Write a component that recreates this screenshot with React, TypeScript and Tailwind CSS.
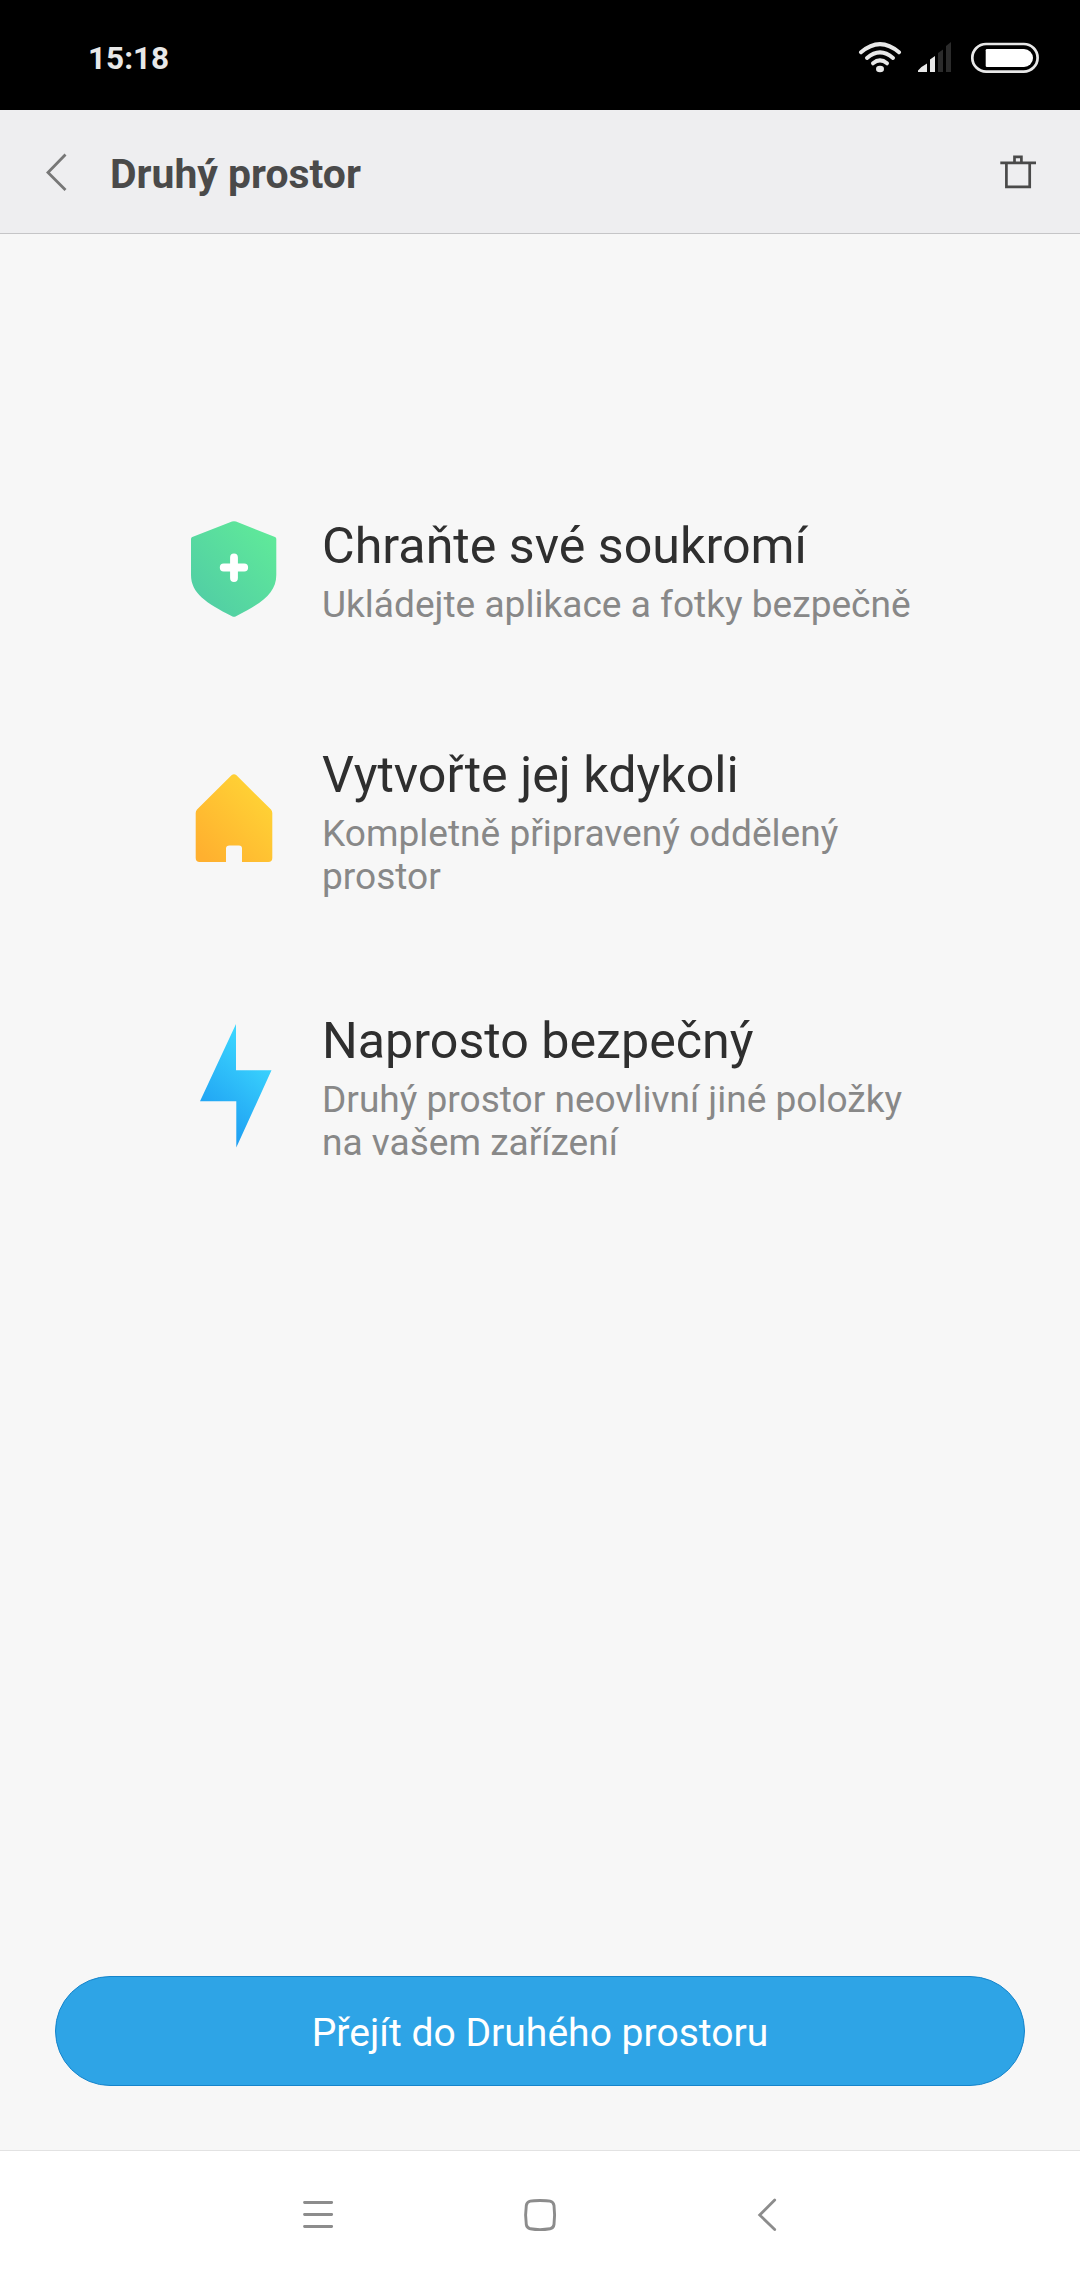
import type { ReactNode } from "react";

function StatusBar() {
  return (
    <div className="flex h-[110px] items-center justify-between bg-black pl-[88px] pr-[40px]">
      <span className="pt-2 text-[31.500px] leading-[38px] font-bold text-[#e8e8e8]">15:18</span>
      <svg className="mt-[6px] h-[34px] w-[182px]" viewBox="858 41 182 34" fill="none">
        <g stroke="#e8e8e8" strokeWidth="4" strokeLinecap="round">
          <path d="M861 52.300Q880 36 899 52.300" />
          <path d="M867 58Q880 46.800 893 58" />
          <path d="M873 63.300Q880 57.500 887 63.300" />
        </g>
        <ellipse cx="880" cy="69" rx="4" ry="3.200" fill="#e8e8e8" />
        <path d="M927 63.500V72H918V70.500Q922 66 927 63.500ZM930 59.500L935 56V72H930Z" fill="#e8e8e8" />
        <path d="M938 53L943 49.500V72H938ZM946 46L951 42V72H946Z" fill="#2b2b2b" />
        <rect x="972.300" y="44" width="65.300" height="27.600" rx="13.800" stroke="#e8e8e8" strokeWidth="2.700" />
        <path d="M987 49H1024A9 9 0 0 1 1024 67H987Q985.700 67 985.700 65.700V50.300Q985.700 49 987 49Z" fill="#fff" />
      </svg>
    </div>
  );
}

function Header() {
  return (
    <header className="flex h-[124px] items-center border-b border-[#c5c5c7] bg-[#eeeef0] pl-[45px] pr-[43px]">
      <svg className="h-[40px] w-[24px]" viewBox="0 0 24 40" fill="none">
        <path d="M20.500 2.500L3 20.500L20.500 38" stroke="#777" strokeWidth="2.800" />
      </svg>
      <h1 className="ml-[41px] mt-[5px] text-[40.900px] leading-[48px] font-bold text-[#4a4a4a]">
        Druhý prostor
      </h1>
      <svg className="ml-auto h-[34px] w-[38px]" viewBox="999 154.500 38 34" fill="none" stroke="#4a4a4a" strokeWidth="2.700">
        <path d="M1000.300 162.300H1036" />
        <path d="M1014.500 162V156.300H1021.400V162" />
        <path d="M1006.400 162V186.400H1029.700V162" />
      </svg>
    </header>
  );
}

function ShieldIcon() {
  return (
    <svg className="mt-[4px] h-[96px] w-[88px] shrink-0" viewBox="0 0 88 96">
      <defs>
        <linearGradient id="shield" x1="0.85" y1="0.1" x2="0.15" y2="0.85">
          <stop offset="0" stopColor="#5fe89a" />
          <stop offset="1" stopColor="#52cfa4" />
        </linearGradient>
      </defs>
      <path
        d="M42 .6Q44 -.2 46 .6L85 16Q86.300 16.600 86.300 18V54C86.300 72 72 82 46 95.300Q44 96.400 42 95.300C16 82 1 72 1 54V18Q1 16.600 2.300 16Z"
        fill="url(#shield)"
      />
      <path d="M44 36.500V57M33.700 46.500H54.200" stroke="#fff" strokeWidth="7.800" strokeLinecap="round" />
    </svg>
  );
}

function HouseIcon() {
  return (
    <svg className="mt-[28px] h-[90px] w-[88px] shrink-0" viewBox="0 0 88 90">
      <defs>
        <linearGradient id="house" x1="0.8" y1="0.2" x2="0.1" y2="0.95">
          <stop offset="0" stopColor="#ffd135" />
          <stop offset="1" stopColor="#ffb02f" />
        </linearGradient>
      </defs>
      <path
        d="M41.500 1.300Q44 -.7 46.500 1.300L81 35.500Q82.300 37 82.300 39V84Q82.300 88 78.300 88H52V74.500Q52 71.500 49 71.500H39.500Q36 71.500 36 74.500V88H9.700Q5.700 88 5.700 84V39Q5.700 37 7 35.500Z"
        fill="url(#house)"
      />
    </svg>
  );
}

function BoltIcon() {
  return (
    <svg className="mt-[12px] h-[124px] w-[88px] shrink-0" viewBox="0 0 88 124">
      <defs>
        <linearGradient id="bolt" x1="0.7" y1="0.1" x2="0.3" y2="0.9">
          <stop offset="0" stopColor="#3dd9ff" />
          <stop offset="1" stopColor="#1d9df2" />
        </linearGradient>
      </defs>
      <path d="M46 0V46.300H81.500L46.300 123.500V77.300H10Z" fill="url(#bolt)" />
    </svg>
  );
}

function Feature({ icon, title, children }: { icon: ReactNode; title: string; children: ReactNode }) {
  return (
    <div className="flex items-start gap-[44px]">
      {icon}
      <div>
        <h2 className="text-[50.200px] leading-[57px] text-[#2f2f2f]">{title}</h2>
        <p className="mt-[9px] text-[37.100px] leading-[43px] text-[#888]">{children}</p>
      </div>
    </div>
  );
}

function NavBar() {
  return (
    <nav className="flex h-[130px] items-center border-t border-[#e2e2e2] bg-white pb-[1px] pl-[302px]">
      <svg className="h-[34px] w-[32px]" viewBox="0 0 32 34" fill="none" stroke="#8c8c8c" strokeWidth="2.800" strokeLinecap="round">
        <path d="M2.500 4.500H29.700M2.500 16.500H29.700M2.500 28.500H29.700" />
      </svg>
      <svg className="ml-[189px] h-[34px] w-[34px]" viewBox="0 0 34 34" fill="none">
        <path
          d="M17 2.500C22 2.500 25 2.700 27 3.200Q30.500 4 31 7.500C31.700 13 31.700 21 31 26.500Q30.500 30 27 30.800C21 31.800 13 31.800 7.300 30.800Q3.800 30 3.300 26.500C2.500 21 2.500 13 3.300 7.500Q3.800 4 7.300 3.200C9.500 2.700 12 2.500 17 2.500Z"
          stroke="#8c8c8c"
          strokeWidth="2.900"
        />
      </svg>
      <svg className="ml-[200px] h-[34px] w-[22px]" viewBox="0 0 22 34" fill="none">
        <path d="M17.700 2L2.700 17L17.700 31.500" stroke="#8c8c8c" strokeWidth="2.800" strokeLinecap="round" />
      </svg>
    </nav>
  );
}

export default function App() {
  return (
    <div className="flex h-[2280px] w-[1080px] flex-col bg-[#f7f7f7] font-['Roboto',sans-serif]">
      <StatusBar />
      <Header />

      <main className="flex flex-1 flex-col px-[55px] pb-16">
        <div className="flex flex-col pl-[135px] pt-[283px]">
          <Feature icon={<ShieldIcon />} title="Chraňte své soukromí">
            Ukládejte aplikace a fotky bezpečně
          </Feature>
          <div className="mt-[120px]">
            <Feature icon={<HouseIcon />} title="Vytvořte jej kdykoli">
              Kompletně připravený oddělený
              <br />
              prostor
            </Feature>
          </div>
          <div className="mt-[114px]">
            <Feature icon={<BoltIcon />} title="Naprosto bezpečný">
              Druhý prostor neovlivní jiné položky
              <br />
              na vašem zařízení
            </Feature>
          </div>
        </div>

        <button className="mt-auto h-[110px] w-full rounded-full border border-[#1584cb] bg-[#2ea4e6] pt-[3px] text-[39.100px] leading-[46px] text-white">
          Přejít do Druhého prostoru
        </button>
      </main>

      <NavBar />
    </div>
  );
}
